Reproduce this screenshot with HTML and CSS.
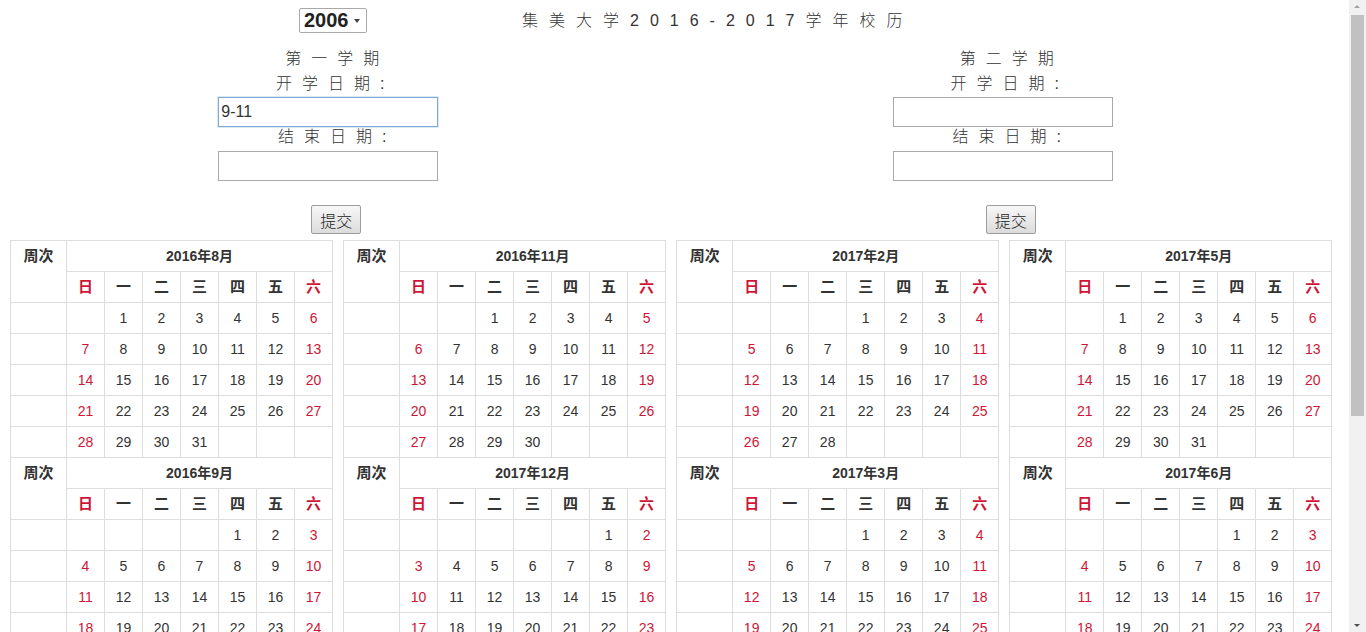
FILE: index.html
```html
<!DOCTYPE html>
<html lang="zh-CN">
<head>
<meta charset="utf-8">
<title>集美大学2016-2017学年校历</title>
<link rel="stylesheet" href="styles.css">
</head>
<body>
<div class="page">
  <div class="head">
    <span class="year-wrap"><select class="year"><option>2006</option></select></span>
    <span class="title">集美大学2016-2017学年校历</span>
  </div>
  <div class="terms">
    <form class="term">
      <div class="lbl">第一学期</div>
      <div class="lbl gap">开学日期:</div>
      <input class="date focus" type="text" value="9-11">
      <div class="lbl">结束日期:</div>
      <input class="date second" type="text">
      <button class="submit" type="button">提交</button>
    </form>
    <form class="term">
      <div class="lbl">第二学期</div>
      <div class="lbl gap">开学日期:</div>
      <input class="date" type="text">
      <div class="lbl">结束日期:</div>
      <input class="date second" type="text">
      <button class="submit" type="button">提交</button>
    </form>
  </div>

  <div class="cals">
    <table class="cal">
      <colgroup><col class="c-wk"><col class="c-d"><col class="c-d"><col class="c-d"><col class="c-d"><col class="c-d"><col class="c-d"><col class="c-d"></colgroup>
      <tbody>
        <tr><th class="wk" rowspan="2">周次</th><th class="mon" colspan="7">2016年8月</th></tr>
        <tr class="wd"><th class="r">日</th><th>一</th><th>二</th><th>三</th><th>四</th><th>五</th><th class="r">六</th></tr>
        <tr><td></td><td class="r"></td><td>1</td><td>2</td><td>3</td><td>4</td><td>5</td><td class="r">6</td></tr>
        <tr><td></td><td class="r">7</td><td>8</td><td>9</td><td>10</td><td>11</td><td>12</td><td class="r">13</td></tr>
        <tr><td></td><td class="r">14</td><td>15</td><td>16</td><td>17</td><td>18</td><td>19</td><td class="r">20</td></tr>
        <tr><td></td><td class="r">21</td><td>22</td><td>23</td><td>24</td><td>25</td><td>26</td><td class="r">27</td></tr>
        <tr><td></td><td class="r">28</td><td>29</td><td>30</td><td>31</td><td></td><td></td><td class="r"></td></tr>
      </tbody>
      <tbody>
        <tr><th class="wk" rowspan="2">周次</th><th class="mon" colspan="7">2016年9月</th></tr>
        <tr class="wd"><th class="r">日</th><th>一</th><th>二</th><th>三</th><th>四</th><th>五</th><th class="r">六</th></tr>
        <tr><td></td><td class="r"></td><td></td><td></td><td></td><td>1</td><td>2</td><td class="r">3</td></tr>
        <tr><td></td><td class="r">4</td><td>5</td><td>6</td><td>7</td><td>8</td><td>9</td><td class="r">10</td></tr>
        <tr><td></td><td class="r">11</td><td>12</td><td>13</td><td>14</td><td>15</td><td>16</td><td class="r">17</td></tr>
        <tr><td></td><td class="r">18</td><td>19</td><td>20</td><td>21</td><td>22</td><td>23</td><td class="r">24</td></tr>
        <tr><td></td><td class="r">25</td><td>26</td><td>27</td><td>28</td><td>29</td><td>30</td><td class="r"></td></tr>
      </tbody>
      <tbody>
        <tr><th class="wk" rowspan="2">周次</th><th class="mon" colspan="7">2016年10月</th></tr>
        <tr class="wd"><th class="r">日</th><th>一</th><th>二</th><th>三</th><th>四</th><th>五</th><th class="r">六</th></tr>
        <tr><td></td><td class="r"></td><td></td><td></td><td></td><td></td><td></td><td class="r">1</td></tr>
        <tr><td></td><td class="r">2</td><td>3</td><td>4</td><td>5</td><td>6</td><td>7</td><td class="r">8</td></tr>
        <tr><td></td><td class="r">9</td><td>10</td><td>11</td><td>12</td><td>13</td><td>14</td><td class="r">15</td></tr>
        <tr><td></td><td class="r">16</td><td>17</td><td>18</td><td>19</td><td>20</td><td>21</td><td class="r">22</td></tr>
        <tr><td></td><td class="r">23</td><td>24</td><td>25</td><td>26</td><td>27</td><td>28</td><td class="r">29</td></tr>
        <tr><td></td><td class="r">30</td><td>31</td><td></td><td></td><td></td><td></td><td class="r"></td></tr>
      </tbody>
    </table>

    <table class="cal">
      <colgroup><col class="c-wk"><col class="c-d"><col class="c-d"><col class="c-d"><col class="c-d"><col class="c-d"><col class="c-d"><col class="c-d"></colgroup>
      <tbody>
        <tr><th class="wk" rowspan="2">周次</th><th class="mon" colspan="7">2016年11月</th></tr>
        <tr class="wd"><th class="r">日</th><th>一</th><th>二</th><th>三</th><th>四</th><th>五</th><th class="r">六</th></tr>
        <tr><td></td><td class="r"></td><td></td><td>1</td><td>2</td><td>3</td><td>4</td><td class="r">5</td></tr>
        <tr><td></td><td class="r">6</td><td>7</td><td>8</td><td>9</td><td>10</td><td>11</td><td class="r">12</td></tr>
        <tr><td></td><td class="r">13</td><td>14</td><td>15</td><td>16</td><td>17</td><td>18</td><td class="r">19</td></tr>
        <tr><td></td><td class="r">20</td><td>21</td><td>22</td><td>23</td><td>24</td><td>25</td><td class="r">26</td></tr>
        <tr><td></td><td class="r">27</td><td>28</td><td>29</td><td>30</td><td></td><td></td><td class="r"></td></tr>
      </tbody>
      <tbody>
        <tr><th class="wk" rowspan="2">周次</th><th class="mon" colspan="7">2017年12月</th></tr>
        <tr class="wd"><th class="r">日</th><th>一</th><th>二</th><th>三</th><th>四</th><th>五</th><th class="r">六</th></tr>
        <tr><td></td><td class="r"></td><td></td><td></td><td></td><td></td><td>1</td><td class="r">2</td></tr>
        <tr><td></td><td class="r">3</td><td>4</td><td>5</td><td>6</td><td>7</td><td>8</td><td class="r">9</td></tr>
        <tr><td></td><td class="r">10</td><td>11</td><td>12</td><td>13</td><td>14</td><td>15</td><td class="r">16</td></tr>
        <tr><td></td><td class="r">17</td><td>18</td><td>19</td><td>20</td><td>21</td><td>22</td><td class="r">23</td></tr>
        <tr><td></td><td class="r">24</td><td>25</td><td>26</td><td>27</td><td>28</td><td>29</td><td class="r">30</td></tr>
        <tr><td></td><td class="r">31</td><td></td><td></td><td></td><td></td><td></td><td class="r"></td></tr>
      </tbody>
      <tbody>
        <tr><th class="wk" rowspan="2">周次</th><th class="mon" colspan="7">2017年1月</th></tr>
        <tr class="wd"><th class="r">日</th><th>一</th><th>二</th><th>三</th><th>四</th><th>五</th><th class="r">六</th></tr>
        <tr><td></td><td class="r">1</td><td>2</td><td>3</td><td>4</td><td>5</td><td>6</td><td class="r">7</td></tr>
        <tr><td></td><td class="r">8</td><td>9</td><td>10</td><td>11</td><td>12</td><td>13</td><td class="r">14</td></tr>
        <tr><td></td><td class="r">15</td><td>16</td><td>17</td><td>18</td><td>19</td><td>20</td><td class="r">21</td></tr>
        <tr><td></td><td class="r">22</td><td>23</td><td>24</td><td>25</td><td>26</td><td>27</td><td class="r">28</td></tr>
        <tr><td></td><td class="r">29</td><td>30</td><td>31</td><td></td><td></td><td></td><td class="r"></td></tr>
      </tbody>
    </table>

    <table class="cal">
      <colgroup><col class="c-wk"><col class="c-d"><col class="c-d"><col class="c-d"><col class="c-d"><col class="c-d"><col class="c-d"><col class="c-d"></colgroup>
      <tbody>
        <tr><th class="wk" rowspan="2">周次</th><th class="mon" colspan="7">2017年2月</th></tr>
        <tr class="wd"><th class="r">日</th><th>一</th><th>二</th><th>三</th><th>四</th><th>五</th><th class="r">六</th></tr>
        <tr><td></td><td class="r"></td><td></td><td></td><td>1</td><td>2</td><td>3</td><td class="r">4</td></tr>
        <tr><td></td><td class="r">5</td><td>6</td><td>7</td><td>8</td><td>9</td><td>10</td><td class="r">11</td></tr>
        <tr><td></td><td class="r">12</td><td>13</td><td>14</td><td>15</td><td>16</td><td>17</td><td class="r">18</td></tr>
        <tr><td></td><td class="r">19</td><td>20</td><td>21</td><td>22</td><td>23</td><td>24</td><td class="r">25</td></tr>
        <tr><td></td><td class="r">26</td><td>27</td><td>28</td><td></td><td></td><td></td><td class="r"></td></tr>
      </tbody>
      <tbody>
        <tr><th class="wk" rowspan="2">周次</th><th class="mon" colspan="7">2017年3月</th></tr>
        <tr class="wd"><th class="r">日</th><th>一</th><th>二</th><th>三</th><th>四</th><th>五</th><th class="r">六</th></tr>
        <tr><td></td><td class="r"></td><td></td><td></td><td>1</td><td>2</td><td>3</td><td class="r">4</td></tr>
        <tr><td></td><td class="r">5</td><td>6</td><td>7</td><td>8</td><td>9</td><td>10</td><td class="r">11</td></tr>
        <tr><td></td><td class="r">12</td><td>13</td><td>14</td><td>15</td><td>16</td><td>17</td><td class="r">18</td></tr>
        <tr><td></td><td class="r">19</td><td>20</td><td>21</td><td>22</td><td>23</td><td>24</td><td class="r">25</td></tr>
        <tr><td></td><td class="r">26</td><td>27</td><td>28</td><td>29</td><td>30</td><td>31</td><td class="r"></td></tr>
      </tbody>
      <tbody>
        <tr><th class="wk" rowspan="2">周次</th><th class="mon" colspan="7">2017年4月</th></tr>
        <tr class="wd"><th class="r">日</th><th>一</th><th>二</th><th>三</th><th>四</th><th>五</th><th class="r">六</th></tr>
        <tr><td></td><td class="r"></td><td></td><td></td><td></td><td></td><td></td><td class="r">1</td></tr>
        <tr><td></td><td class="r">2</td><td>3</td><td>4</td><td>5</td><td>6</td><td>7</td><td class="r">8</td></tr>
        <tr><td></td><td class="r">9</td><td>10</td><td>11</td><td>12</td><td>13</td><td>14</td><td class="r">15</td></tr>
        <tr><td></td><td class="r">16</td><td>17</td><td>18</td><td>19</td><td>20</td><td>21</td><td class="r">22</td></tr>
        <tr><td></td><td class="r">23</td><td>24</td><td>25</td><td>26</td><td>27</td><td>28</td><td class="r">29</td></tr>
        <tr><td></td><td class="r">30</td><td></td><td></td><td></td><td></td><td></td><td class="r"></td></tr>
      </tbody>
    </table>

    <table class="cal">
      <colgroup><col class="c-wk"><col class="c-d"><col class="c-d"><col class="c-d"><col class="c-d"><col class="c-d"><col class="c-d"><col class="c-d"></colgroup>
      <tbody>
        <tr><th class="wk" rowspan="2">周次</th><th class="mon" colspan="7">2017年5月</th></tr>
        <tr class="wd"><th class="r">日</th><th>一</th><th>二</th><th>三</th><th>四</th><th>五</th><th class="r">六</th></tr>
        <tr><td></td><td class="r"></td><td>1</td><td>2</td><td>3</td><td>4</td><td>5</td><td class="r">6</td></tr>
        <tr><td></td><td class="r">7</td><td>8</td><td>9</td><td>10</td><td>11</td><td>12</td><td class="r">13</td></tr>
        <tr><td></td><td class="r">14</td><td>15</td><td>16</td><td>17</td><td>18</td><td>19</td><td class="r">20</td></tr>
        <tr><td></td><td class="r">21</td><td>22</td><td>23</td><td>24</td><td>25</td><td>26</td><td class="r">27</td></tr>
        <tr><td></td><td class="r">28</td><td>29</td><td>30</td><td>31</td><td></td><td></td><td class="r"></td></tr>
      </tbody>
      <tbody>
        <tr><th class="wk" rowspan="2">周次</th><th class="mon" colspan="7">2017年6月</th></tr>
        <tr class="wd"><th class="r">日</th><th>一</th><th>二</th><th>三</th><th>四</th><th>五</th><th class="r">六</th></tr>
        <tr><td></td><td class="r"></td><td></td><td></td><td></td><td>1</td><td>2</td><td class="r">3</td></tr>
        <tr><td></td><td class="r">4</td><td>5</td><td>6</td><td>7</td><td>8</td><td>9</td><td class="r">10</td></tr>
        <tr><td></td><td class="r">11</td><td>12</td><td>13</td><td>14</td><td>15</td><td>16</td><td class="r">17</td></tr>
        <tr><td></td><td class="r">18</td><td>19</td><td>20</td><td>21</td><td>22</td><td>23</td><td class="r">24</td></tr>
        <tr><td></td><td class="r">25</td><td>26</td><td>27</td><td>28</td><td>29</td><td>30</td><td class="r"></td></tr>
      </tbody>
      <tbody>
        <tr><th class="wk" rowspan="2">周次</th><th class="mon" colspan="7">2017年7月</th></tr>
        <tr class="wd"><th class="r">日</th><th>一</th><th>二</th><th>三</th><th>四</th><th>五</th><th class="r">六</th></tr>
        <tr><td></td><td class="r"></td><td></td><td></td><td></td><td></td><td></td><td class="r">1</td></tr>
        <tr><td></td><td class="r">2</td><td>3</td><td>4</td><td>5</td><td>6</td><td>7</td><td class="r">8</td></tr>
        <tr><td></td><td class="r">9</td><td>10</td><td>11</td><td>12</td><td>13</td><td>14</td><td class="r">15</td></tr>
        <tr><td></td><td class="r">16</td><td>17</td><td>18</td><td>19</td><td>20</td><td>21</td><td class="r">22</td></tr>
        <tr><td></td><td class="r">23</td><td>24</td><td>25</td><td>26</td><td>27</td><td>28</td><td class="r">29</td></tr>
        <tr><td></td><td class="r">30</td><td>31</td><td></td><td></td><td></td><td></td><td class="r"></td></tr>
      </tbody>
    </table>
  </div>
</div>

<div class="scrollbar" aria-hidden="true">
  <span class="sb-up"></span>
  <span class="sb-thumb"></span>
  <span class="sb-down"></span>
</div>
</body>
</html>
```

FILE: styles.css
```css
html {
  overflow: hidden;
}
body {
  margin: 0;
  background: #fff;
  color: #333;
  font-family: "Liberation Sans", "Noto Sans CJK SC", sans-serif;
}
.page {
  width: 1349px;
}

/* header */
.head {
  display: flex;
  align-items: center;
  height: 25px;
  padding: 8px 0 0 299px;
}
.year-wrap {
  position: relative;
  display: inline-block;
  width: 68px;
  height: 25px;
}
.year {
  -webkit-appearance: none;
  appearance: none;
  width: 68px;
  height: 25px;
  box-sizing: border-box;
  border: 1px solid #a9a9a9;
  border-radius: 2px;
  background: #fff;
  color: #222;
  font: bold 20px/23px "Liberation Sans", sans-serif;
  padding: 0 0 0 4px;
  margin: 0;
}
.year-wrap::after {
  content: "";
  position: absolute;
  right: 7px;
  top: 11px;
  width: 0;
  height: 0;
  border-left: 3px solid transparent;
  border-right: 3px solid transparent;
  border-top: 4px solid #444;
  pointer-events: none;
}
.title {
  margin-left: 155px;
  font-size: 16px;
  line-height: 20px;
  letter-spacing: 11px;
  color: #333;
  font-family: "Liberation Sans", "Noto Sans CJK SC", sans-serif;
  font-weight: 300;
}

/* terms */
.terms {
  display: flex;
  margin-top: 16px;
}
.term {
  width: 50%;
  display: flex;
  flex-direction: column;
  align-items: center;
  margin: 0;
}
.lbl {
  font-size: 16px;
  line-height: 20px;
  height: 20px;
  letter-spacing: 10px;
  font-weight: 300;
  color: #333;
  white-space: nowrap;
}
.lbl.gap {
  margin-top: 5px;
  margin-right: 4px;
}
.date {
  width: 220px;
  height: 30px;
  box-sizing: border-box;
  margin: 3px 18px 0 0;
  padding: 1px 2px;
  border: 1px solid #a9a9a9;
  border-radius: 0;
  font: 16px "Liberation Sans", sans-serif;
  color: #333;
  background: #fff;
  outline: none;
}
.date.second {
  margin-top: 4px;
}
.date.focus {
  border-color: #7ea9d8;
  box-shadow: 0 0 0 0.5px #b7d0ea;
}
.submit {
  margin-top: 24px;
  margin-right: 2px;
  width: 50px;
  height: 29px;
  box-sizing: border-box;
  padding: 0;
  border: 1px solid #9c9c9c;
  border-radius: 2px;
  background: linear-gradient(#f7f7f7, #dcdcdc);
  font: 16px "Noto Sans CJK SC", sans-serif;
  font-weight: 300;
  color: #222;
}

/* calendars */
.cals {
  display: flex;
  align-items: flex-start;
  gap: 10px;
  padding-left: 10px;
  margin-top: 6px;
}
.cal {
  border-collapse: collapse;
  table-layout: fixed;
  width: 322px;
}
.c-wk {
  width: 56px;
}
.c-d {
  width: 38px;
}
.cal th,
.cal td {
  border: 1px solid #ddd;
  padding: 5px;
  height: 20px;
  line-height: 20px;
  font-size: 14px;
  text-align: center;
  vertical-align: middle;
  color: #333;
}
.cal th {
  font-weight: bold;
}
.cal th.wk {
  vertical-align: top;
  font-size: 15px;
}
.cal .wd th {
  font-size: 15px;
}
.cal .r {
  color: #cf1536;
}

/* drawn scrollbar overlay */
.scrollbar {
  position: fixed;
  top: 0;
  right: 0;
  width: 17px;
  height: 632px;
  background: #f1f1f1;
}
.sb-thumb {
  position: absolute;
  left: 2px;
  right: 2px;
  top: 15px;
  height: 401px;
  background: #c1c1c1;
}
.sb-up,
.sb-down {
  position: absolute;
  left: 5px;
  width: 0;
  height: 0;
  border-left: 3.5px solid transparent;
  border-right: 3.5px solid transparent;
}
.sb-up {
  top: 5px;
  border-bottom: 3.5px solid #a3a3a3;
}
.sb-down {
  bottom: 5px;
  border-top: 3.5px solid #505050;
}
```
